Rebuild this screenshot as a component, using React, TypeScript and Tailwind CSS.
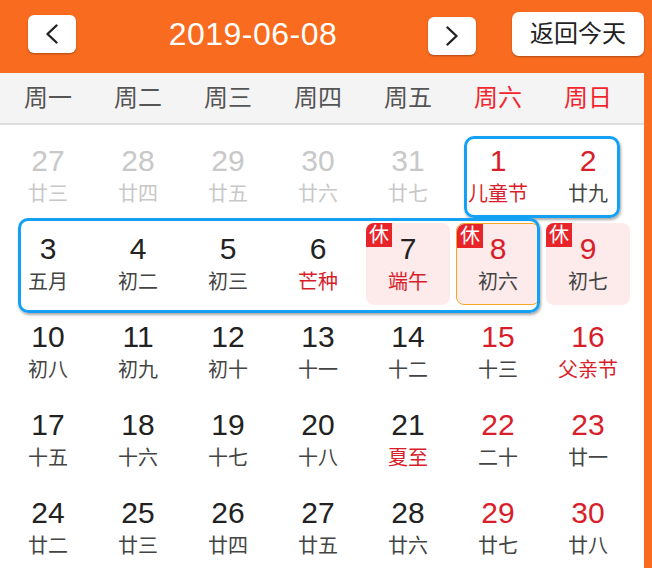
import React from 'react';

type Day = {
  day: number;
  lunar: string;
  past?: boolean;
  red?: boolean; // red day number (weekend / holiday)
  lunarRed?: boolean; // festival / solar term
  rest?: boolean; // 休 holiday
  selected?: boolean;
};

const weeks: Day[][] = [
  [
    { day: 27, lunar: '廿三', past: true },
    { day: 28, lunar: '廿四', past: true },
    { day: 29, lunar: '廿五', past: true },
    { day: 30, lunar: '廿六', past: true },
    { day: 31, lunar: '廿七', past: true },
    { day: 1, lunar: '儿童节', red: true, lunarRed: true },
    { day: 2, lunar: '廿九', red: true },
  ],
  [
    { day: 3, lunar: '五月' },
    { day: 4, lunar: '初二' },
    { day: 5, lunar: '初三' },
    { day: 6, lunar: '芒种', lunarRed: true },
    { day: 7, lunar: '端午', lunarRed: true, rest: true },
    { day: 8, lunar: '初六', red: true, rest: true, selected: true },
    { day: 9, lunar: '初七', red: true, rest: true },
  ],
  [
    { day: 10, lunar: '初八' },
    { day: 11, lunar: '初九' },
    { day: 12, lunar: '初十' },
    { day: 13, lunar: '十一' },
    { day: 14, lunar: '十二' },
    { day: 15, lunar: '十三', red: true },
    { day: 16, lunar: '父亲节', red: true, lunarRed: true },
  ],
  [
    { day: 17, lunar: '十五' },
    { day: 18, lunar: '十六' },
    { day: 19, lunar: '十七' },
    { day: 20, lunar: '十八' },
    { day: 21, lunar: '夏至', lunarRed: true },
    { day: 22, lunar: '二十', red: true },
    { day: 23, lunar: '廿一', red: true },
  ],
  [
    { day: 24, lunar: '廿二' },
    { day: 25, lunar: '廿三' },
    { day: 26, lunar: '廿四' },
    { day: 27, lunar: '廿五' },
    { day: 28, lunar: '廿六' },
    { day: 29, lunar: '廿七', red: true },
    { day: 30, lunar: '廿八', red: true },
  ],
];

const weekdays = ['周一', '周二', '周三', '周四', '周五', '周六', '周日'];

const DayCell: React.FC<{ d: Day }> = ({ d }) => {
  const numColor = d.past ? 'text-[#c8c8c8]' : d.red ? 'text-[#d81e2a]' : 'text-[#222222]';
  const lunarColor = d.past ? 'text-[#c8c8c8]' : d.lunarRed ? 'text-[#d81e2a]' : 'text-[#444444]';
  return (
    <div
      className={`relative m-[3px] h-[82px] rounded-[8px] flex flex-col items-center justify-center ${
        d.rest ? 'bg-[#fdeaea]' : ''
      } ${d.selected ? 'border-[1.5px] border-[#f5a623]' : ''}`}
    >
      {d.rest && (
        <span className="absolute left-0 top-0 w-[26px] h-[24px] rounded-tl-[8px] bg-[#e8242b] text-white text-[20px] leading-[24px] text-center">
          休
        </span>
      )}
      <span className={`text-[30px] leading-[34px] ${numColor}`}>{d.day}</span>
      <span className={`text-[20px] leading-[28px] mt-[2px] ${lunarColor}`}>{d.lunar}</span>
    </div>
  );
};

export default function App() {
  return (
    <div
      className="w-[652px] h-[568px] overflow-hidden bg-[#f96b1e]"
      style={{ fontFamily: '"Liberation Sans", "Noto Sans CJK SC", sans-serif' }}
    >
      {/* Header */}
      <div className="w-[644px] h-[73px] flex items-center pl-[28px] pb-[5px]">
        <button className="w-[48px] h-[38px] bg-white rounded-[6px] shadow-[0_1px_2px_rgba(0,0,0,0.3)] flex items-center justify-center">
          <svg width="14" height="20" viewBox="0 0 14 20" fill="none" stroke="#222" strokeWidth="2.4" strokeLinecap="round" strokeLinejoin="round">
            <path d="M11.5 1.5 L2.5 10 L11.5 18.5" />
          </svg>
        </button>
        <div className="flex-1 text-center text-white text-[32px] tracking-[0.5px] pl-[2px]">2019-06-08</div>
        <button className="w-[48px] h-[38px] mt-[3px] bg-white rounded-[6px] shadow-[0_1px_2px_rgba(0,0,0,0.3)] flex items-center justify-center">
          <svg width="14" height="20" viewBox="0 0 14 20" fill="none" stroke="#222" strokeWidth="2.4" strokeLinecap="round" strokeLinejoin="round">
            <path d="M2.5 1.5 L11.5 10 L2.5 18.5" />
          </svg>
        </button>
        <button className="ml-[36px] w-[132px] h-[44px] bg-white rounded-[7px] shadow-[0_1px_2px_rgba(0,0,0,0.3)] text-[24px] text-[#222] flex items-center justify-center">
          返回今天
        </button>
      </div>

      {/* Body */}
      <div className="relative w-[644px] h-[495px] bg-white">
        <div className="h-[52px] bg-[#f4f4f4] border-b-2 border-[#dddddd] pl-[3px]">
          <div className="w-[630px] h-full grid grid-cols-7 items-center">
            {weekdays.map((w, i) => (
              <div key={w} className={`text-center text-[24px] ${i >= 5 ? 'text-[#f2262e]' : 'text-[#555555]'}`}>
                {w}
              </div>
            ))}
          </div>
        </div>

        <div className="pl-[3px] pt-[7px]">
          {weeks.map((week, wi) => (
            <div key={wi} className="w-[630px] grid grid-cols-7">
              {week.map((d, di) => (
                <DayCell key={di} d={d} />
              ))}
            </div>
          ))}
        </div>

        {/* selection outlines */}
        <div className="absolute left-[464px] top-[63px] w-[156px] h-[82px] border-[3px] border-[#14a1f3] rounded-[10px] shadow-[1px_2px_3px_rgba(0,0,0,0.35)]" />
        <div className="absolute left-[18px] top-[145px] w-[522px] h-[95px] border-[3px] border-[#14a1f3] rounded-[10px] shadow-[1px_2px_3px_rgba(0,0,0,0.35)]" />
      </div>
    </div>
  );
}
